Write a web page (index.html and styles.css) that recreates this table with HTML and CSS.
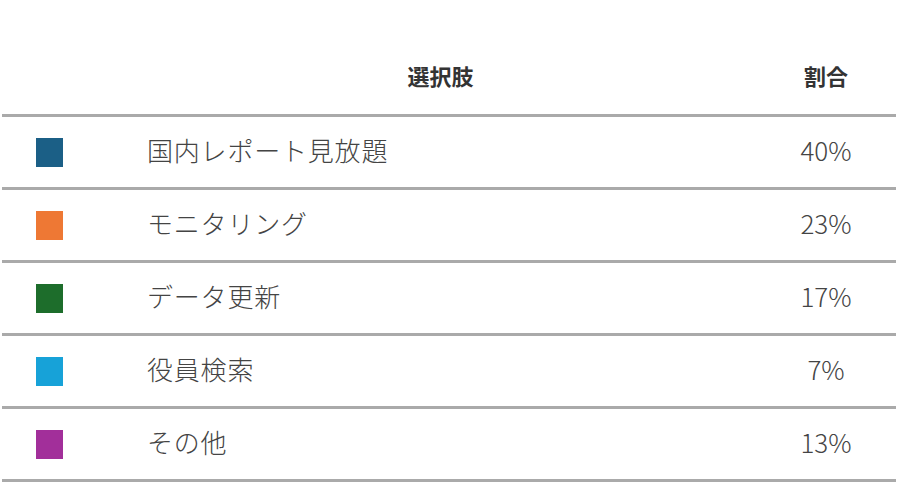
FILE: index.html
```html
<!DOCTYPE html>
<html lang="ja">
<head>
<meta charset="utf-8">
<link rel="stylesheet" href="styles.css">
</head>
<body>
<div class="table">
  <div class="row head">
    <div class="cell"></div>
    <div class="cell label">選択肢</div>
    <div class="cell pct">割合</div>
  </div>
  <div class="row">
    <div class="cell"><span class="sw c1"></span></div>
    <div class="cell name">国内レポート見放題</div>
    <div class="cell pct">40%</div>
  </div>
  <div class="row">
    <div class="cell"><span class="sw c2"></span></div>
    <div class="cell name">モニタリング</div>
    <div class="cell pct">23%</div>
  </div>
  <div class="row">
    <div class="cell"><span class="sw c3"></span></div>
    <div class="cell name">データ更新</div>
    <div class="cell pct">17%</div>
  </div>
  <div class="row">
    <div class="cell"><span class="sw c4"></span></div>
    <div class="cell name">役員検索</div>
    <div class="cell pct">7%</div>
  </div>
  <div class="row">
    <div class="cell"><span class="sw c5"></span></div>
    <div class="cell name">その他</div>
    <div class="cell pct">13%</div>
  </div>
</div>
</body>
</html>
```
FILE: styles.css
```css
html, body {
  margin: 0;
  padding: 0;
  background: #fff;
}
body {
  font-family: "Noto Sans CJK JP", "Noto Sans", sans-serif;
  color: #444;
}
.table {
  width: 894px;
  margin-left: 2px;
}
.row {
  display: grid;
  grid-template-columns: 145px 1fr 140px;
  align-items: center;
  height: 70px;
  border-bottom: 3px solid #aaa;
  font-size: 26px;
  font-weight: 300;
}
.row.head {
  height: 74px;
  padding-top: 40px;
  font-size: 22px;
  font-weight: 700;
  color: #333;
}
.cell {
  display: flex;
  align-items: center;
}
.row .name,
.row .pct {
  padding-bottom: 6px;
}
.row.head .label,
.row.head .pct {
  padding-bottom: 5px;
}
.label {
  justify-content: center;
  padding-right: 22px;
}
.pct {
  justify-content: center;
}
.name {
  letter-spacing: 0.8px;
}
.sw {
  display: block;
  width: 27px;
  height: 29px;
  margin-left: 34px;
}
.c1 { background: #1b5f86; }
.c2 { background: #ee7834; }
.c3 { background: #1d6d2b; }
.c4 { background: #17a2d8; }
.c5 { background: #a22f9a; }
```
